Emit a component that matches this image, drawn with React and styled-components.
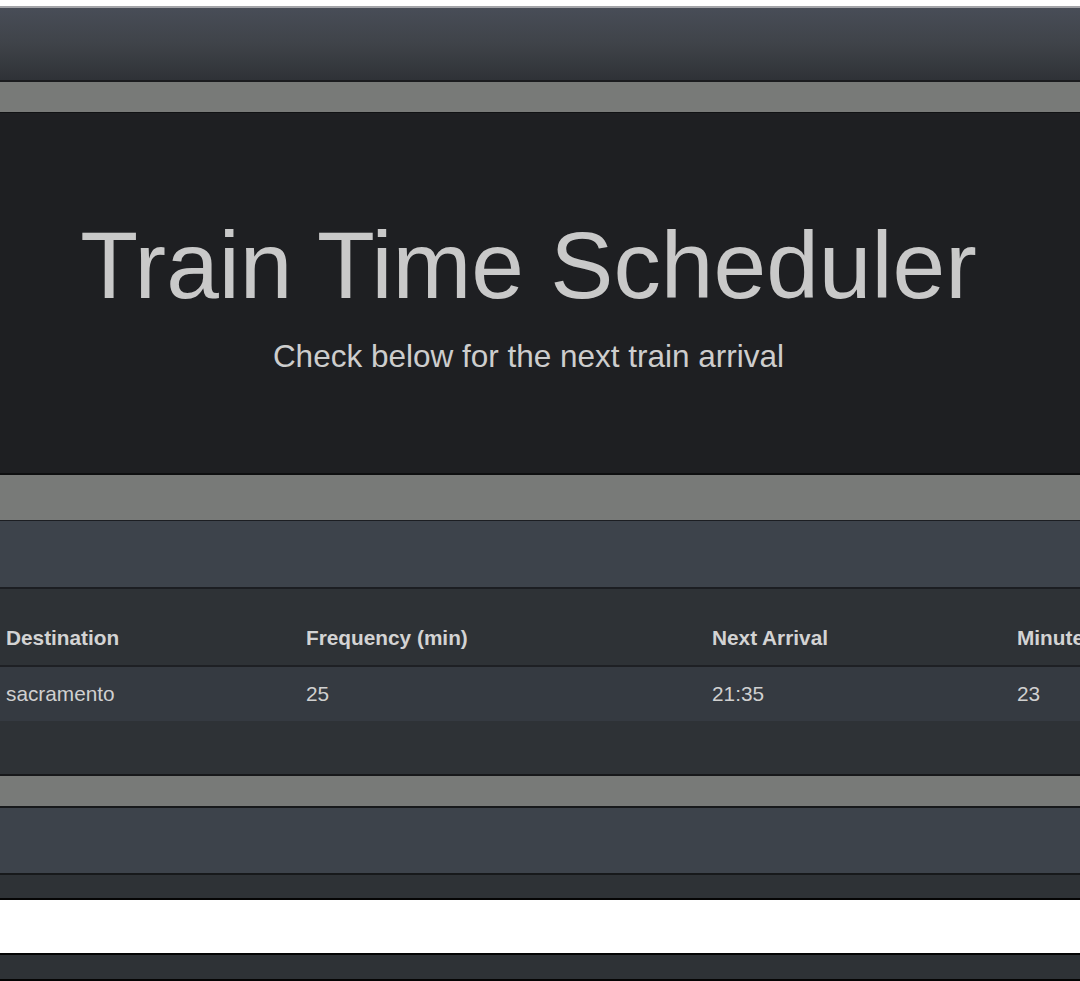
import styled, { createGlobalStyle } from 'styled-components'

const Global = createGlobalStyle`
  html, body {
    margin: 0;
    padding: 0;
    background: #ffffff;
    overflow-x: hidden;
  }
  body {
    font-family: 'Liberation Sans', Arial, sans-serif;
    color: #cfcfcf;
  }
`

const TopGap = styled.div`
  height: 6px;
  background: #ffffff;
`

const Navbar = styled.nav`
  height: 72px;
  border-top: 2px solid #a3a4a8;
  border-bottom: 2px solid #1b1c1f;
  background: linear-gradient(180deg, #484d57 0%, #3f4349 50%, #2f3237 100%);
`

const Main = styled.main`
  background: #787a78;
  padding-top: 30px;
`

const Jumbo = styled.section`
  height: 363px;
  box-sizing: border-box;
  border-top: 1px solid #111214;
  border-bottom: 2px solid #0e0f10;
  background: #1e1f22;
  padding: 96px 23px 0 0;
  text-align: center;
`

const Title = styled.h1`
  margin: 0;
  font-size: 94.7px;
  line-height: 1.2;
  font-weight: 400;
  color: #c9c9c9;
  white-space: nowrap;
`

const Lead = styled.p`
  margin: 10px 0 0;
  font-size: 31.5px;
  line-height: 1.5;
  color: #cdcdcd;
`

const Spacer = styled.div`
  height: ${p => p.h}px;
  background: ${p => p.bg || '#787a78'};
`

const Bar = styled.div`
  height: ${p => p.h}px;
  background: ${p => p.bg};
  border-top: ${p => (p.top ? `${p.top}px solid ${p.line || '#1c1e21'}` : 'none')};
  border-bottom: ${p => (p.bottom ? `${p.bottom}px solid ${p.line || '#1c1e21'}` : 'none')};
`

const Card = styled.div`
  background: #2e3236;
  border-bottom: 2px solid #17181a;
`

const Table = styled.table`
  border-collapse: collapse;
  table-layout: fixed;
  width: 1620px;
  font-size: 20.8px;
  line-height: 32px;
`

const Th = styled.th`
  box-sizing: border-box;
  width: ${p => p.w}px;
  text-align: left;
  vertical-align: bottom;
  font-weight: 700;
  color: #d3d3d3;
  padding: 33px 6px 11px;
  border-bottom: 2px solid #1e2024;
  white-space: nowrap;
`

const Row = styled.tr`
  background: #353a41;
`

const Td = styled.td`
  padding: 11px 6px;
  color: #d0d0d0;
  white-space: nowrap;
`

const columns = [
  { label: 'Destination', w: 300 },
  { label: 'Frequency (min)', w: 406 },
  { label: 'Next Arrival', w: 305 },
  { label: 'Minutes Away', w: 305 },
  { label: '', w: 304 },
]

const trains = [
  { destination: 'sacramento', frequency: '25', next: '21:35', away: '23' },
]

export default function App() {
  return (
    <>
      <Global />
      <TopGap />
      <Navbar />
      <Main>
        <Jumbo>
          <Title>Train Time Scheduler</Title>
          <Lead>Check below for the next train arrival</Lead>
        </Jumbo>
        <Spacer h={45} />
        <Bar h={66} bg="#3d434b" top={1} bottom={2} line="#1c1e22" />
        <Card>
          <Table>
            <thead>
              <tr>
                {columns.map(c => (
                  <Th key={c.label || 'x'} w={c.w}>{c.label}</Th>
                ))}
              </tr>
            </thead>
            <tbody>
              {trains.map(t => (
                <Row key={t.destination}>
                  <Td>{t.destination}</Td>
                  <Td>{t.frequency}</Td>
                  <Td>{t.next}</Td>
                  <Td>{t.away}</Td>
                  <Td />
                </Row>
              ))}
            </tbody>
          </Table>
          <Spacer h={53} bg="#2e3236" />
        </Card>
        <Spacer h={30} />
        <Bar h={65} bg="#3d434b" top={2} bottom={2} line="#17191b" />
        <Bar h={23} bg="#2e3236" bottom={2} line="#050505" />
      </Main>
      <Spacer h={53} bg="#ffffff" />
      <Bar h={24} bg="#2e3236" top={2} bottom={2} line="#050505" />
    </>
  )
}
